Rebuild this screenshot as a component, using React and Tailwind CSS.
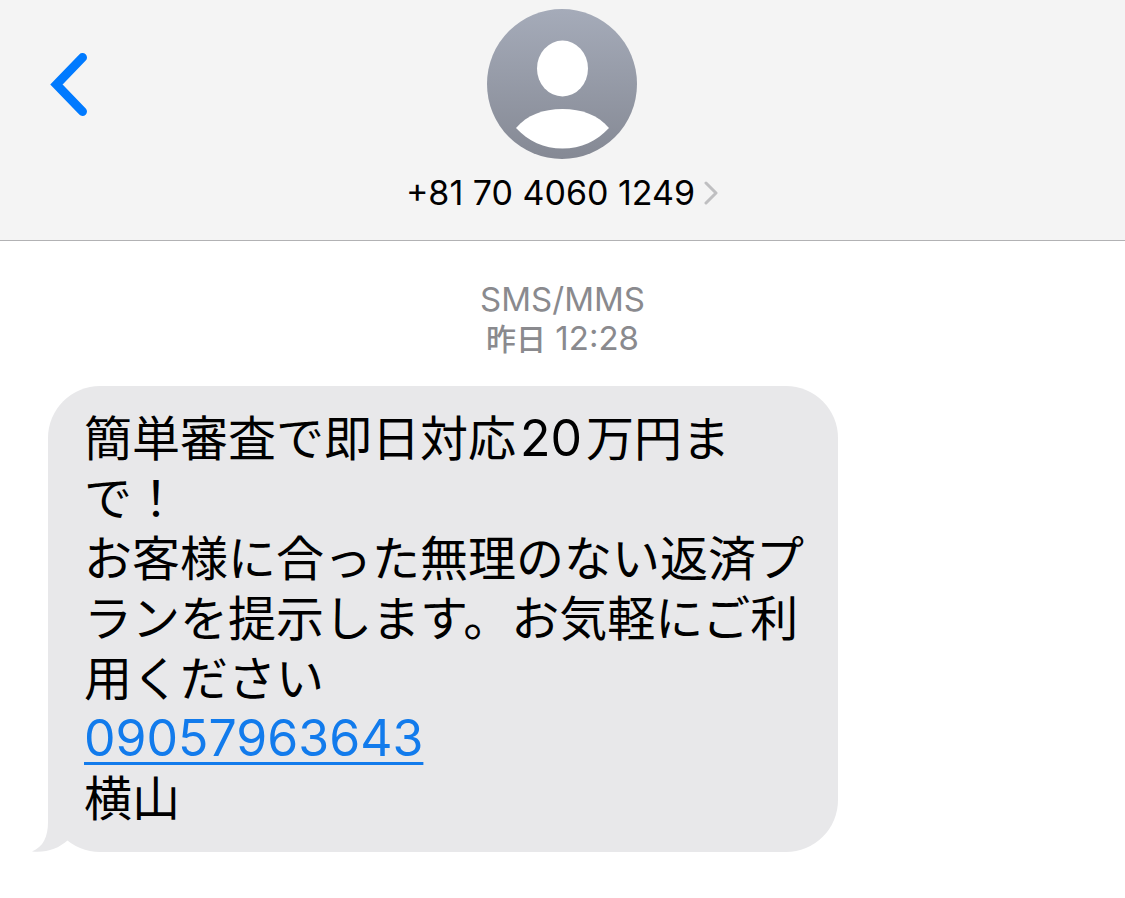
import { useId } from 'react';

const contact = {
  phone: '+81 70 4060 1249',
};

const messages = [
  {
    id: 1,
    lines: [
      { parts: ['簡単審査で即日対応', { number: '20' }, '万円まで！'] },
      { parts: ['お客様に合った無理のない返済プランを提示します。お気軽にご利用ください'] },
      { parts: [{ tel: '09057963643' }] },
      { parts: ['横山'] },
    ],
  },
];

function Avatar() {
  const gradientId = useId();

  return (
    <svg viewBox="0 0 150 150" className="size-[150px]" aria-hidden="true">
      <defs>
        <linearGradient id={gradientId} x1="0" y1="0" x2="0" y2="1">
          <stop offset="0" stopColor="#a5abb9" />
          <stop offset="1" stopColor="#858994" />
        </linearGradient>
      </defs>
      <circle cx="75" cy="75" r="75" fill={`url(#${gradientId})`} />
      <ellipse cx="75.5" cy="59.5" rx="25.5" ry="28" fill="#fff" />
      <path d="M29 119C40 106 56 100 75.5 100S111 106 122 119C110 132 94 139.5 75.5 139.5S41 132 29 119Z" fill="#fff" />
    </svg>
  );
}

function Header() {
  return (
    <header className="grid grid-cols-[1fr_auto_1fr] items-start border-b border-[#b2b2b4] bg-[#f4f4f4] pt-[9px] pb-[27px]">
      <button type="button" aria-label="戻る" className="mt-10 ml-11 w-12 text-[#007aff]">
        <svg viewBox="0 0 48 70" className="h-[70px] w-12" fill="none" stroke="currentColor" strokeWidth="9" strokeLinecap="round" strokeLinejoin="miter">
          <path d="M38.5 8.500L12.500 35.500L38.500 62.500" />
        </svg>
      </button>
      <button type="button" className="flex flex-col items-center gap-[14px]">
        <Avatar />
        <span className="flex items-center gap-2 text-[34px] leading-10 text-black">
          {contact.phone}
          <svg viewBox="0 0 16 24" className="h-6 w-4" fill="none" stroke="#bfbfc1" strokeWidth="3" strokeLinecap="round" strokeLinejoin="round" aria-hidden="true">
            <path d="M3 2L13 12L3 22" />
          </svg>
        </span>
      </button>
    </header>
  );
}

function MessagePart({ part }) {
  if (part.tel) {
    return (
      <a
        href={`tel:${part.tel}`}
        className="text-[50px] leading-none text-[#127bec] underline decoration-[3px] underline-offset-[6px]"
      >
        {part.tel}
      </a>
    );
  }

  if (part.number) {
    return <span className="mx-1 text-[50px] leading-none">{part.number}</span>;
  }

  return part;
}

function Bubble({ message }) {
  return (
    <div className="relative w-fit max-w-[790px] rounded-[52px] bg-[#e8e8ea] py-[23px] pr-8 pl-9 text-[48px] leading-[60px] text-black">
      <svg viewBox="0 0 60 60" className="absolute bottom-0 -left-4 size-[60px]" fill="#e8e8ea" aria-hidden="true">
        <path d="M16 0V30C16 45 11 55 0 59.500C14 61 26 57 36 48L50 30V0Z" />
      </svg>
      {message.lines.map((line, i) => (
        <p key={i} className="relative">
          {line.parts.map((part, j) => (
            <MessagePart key={j} part={part} />
          ))}
        </p>
      ))}
    </div>
  );
}

export default function App() {
  return (
    <div lang="ja" className="min-h-screen bg-white font-[Inter,'Noto_Sans_CJK_JP',sans-serif]">
      <Header />
      <main className="px-12 pt-[39px] pb-11">
        <div className="mb-7 text-center text-[33px] leading-[39px] text-[#8a8a8e]">
          <p>SMS/MMS</p>
          <p>
            <span className="text-[30px] leading-none font-medium">昨日</span> <time>12:28</time>
          </p>
        </div>
        {messages.map((message) => (
          <Bubble key={message.id} message={message} />
        ))}
      </main>
    </div>
  );
}
